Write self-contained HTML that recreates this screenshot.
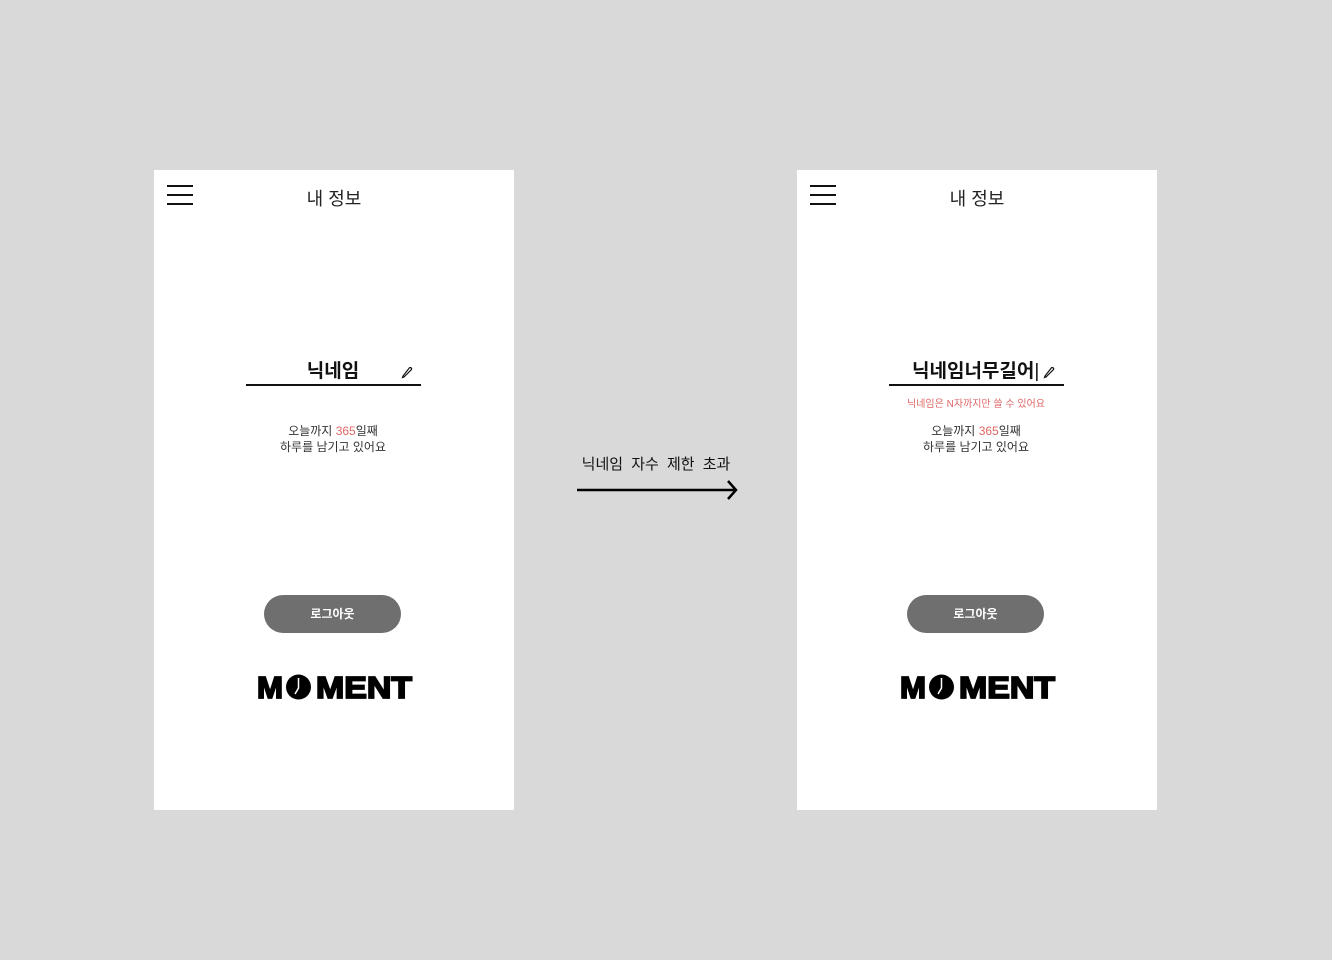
<!DOCTYPE html>
<html><head><meta charset="utf-8"><style>
body{margin:0;width:1332px;height:960px;background:#d9d9d9;position:relative;overflow:hidden;font-family:"Liberation Sans","Noto Sans CJK KR",sans-serif}
.s{position:absolute;top:170px;width:360px;height:640px;background:#fff}
.a{position:absolute}
.ham{left:13px;width:26px;height:2px;background:#111}
.t{left:0;width:360px;text-align:center}
</style></head><body>

<div class="s" style="left:154px">
  <div class="a ham" style="top:15px"></div><div class="a ham" style="top:24px"></div><div class="a ham" style="top:33px"></div>
  <div class="a t" style="top:15px;font-size:18px;color:#222">내 정보</div>
  <div class="a t" style="top:186px;font-size:19px;font-weight:bold;color:#111;left:-1px">닉네임</div>
  <svg class="a" style="left:246px;top:195px" width="14" height="14" viewBox="0 0 14 14"><path d="M3 11 L2.5 12.5 L4 12 L11.5 4.5 Q12 3.5 11 2.8 Q10 2.2 9.3 3 Z" fill="none" stroke="#111" stroke-width="1.2"/></svg>
  <div class="a" style="left:92px;top:214px;width:175px;height:1.5px;background:#111"></div>
  <div class="a t" style="top:253px;font-size:12px;line-height:16px;color:#333;left:-1px">오늘까지 <span style="color:#e06666">365</span>일째<br>하루를 남기고 있어요</div>
  <div class="a" style="left:110px;top:425px;width:137px;height:38px;border-radius:19px;background:#6f6f6f;color:#fff;font-size:12px;font-weight:bold;text-align:center;line-height:38px">로그아웃</div>
  <svg class="a" style="left:100px;top:503px" width="165" height="30"><g stroke="#000" stroke-width="1.8" stroke-linejoin="miter"><text x="3" y="25" font-family="Liberation Sans" font-weight="bold" font-size="31" textLength="26" lengthAdjust="spacingAndGlyphs">M</text><text x="62" y="25" font-family="Liberation Sans" font-weight="bold" font-size="31" textLength="96" lengthAdjust="spacingAndGlyphs">MENT</text></g><circle cx="44.5" cy="14" r="12.5" fill="#000"/><path d="M44.5 5 L44.5 15 L41 21" stroke="#fff" stroke-width="1.5" fill="none"/></svg>
</div>

<div class="a" style="left:560px;top:453px;width:192px;text-align:center;font-size:15px;color:#111;word-spacing:4px">닉네임 자수 제한 초과</div>
<svg class="a" style="left:575px;top:478px" width="165" height="25"><path d="M2 12 H160 M153 3 L161 12 L153 21" stroke="#000" stroke-width="2.5" fill="none"/></svg>

<div class="s" style="left:797px">
  <div class="a ham" style="top:15px"></div><div class="a ham" style="top:24px"></div><div class="a ham" style="top:33px"></div>
  <div class="a t" style="top:15px;font-size:18px;color:#222">내 정보</div>
  <div class="a" style="left:115px;top:186px;font-size:19px;font-weight:bold;color:#111">닉네임너무길어<span style="font-weight:normal">|</span></div>
  <svg class="a" style="left:245px;top:195px" width="14" height="14" viewBox="0 0 14 14"><path d="M3 11 L2.5 12.5 L4 12 L11.5 4.5 Q12 3.5 11 2.8 Q10 2.2 9.3 3 Z" fill="none" stroke="#111" stroke-width="1.2"/></svg>
  <div class="a" style="left:92px;top:214px;width:175px;height:1.5px;background:#111"></div>
  <div class="a t" style="top:225px;font-size:10px;color:#e06666;left:-1px">닉네임은 N자까지만 쓸 수 있어요</div>
  <div class="a t" style="top:253px;font-size:12px;line-height:16px;color:#333;left:-1px">오늘까지 <span style="color:#e06666">365</span>일째<br>하루를 남기고 있어요</div>
  <div class="a" style="left:110px;top:425px;width:137px;height:38px;border-radius:19px;background:#6f6f6f;color:#fff;font-size:12px;font-weight:bold;text-align:center;line-height:38px">로그아웃</div>
  <svg class="a" style="left:100px;top:503px" width="165" height="30"><g stroke="#000" stroke-width="1.8" stroke-linejoin="miter"><text x="3" y="25" font-family="Liberation Sans" font-weight="bold" font-size="31" textLength="26" lengthAdjust="spacingAndGlyphs">M</text><text x="62" y="25" font-family="Liberation Sans" font-weight="bold" font-size="31" textLength="96" lengthAdjust="spacingAndGlyphs">MENT</text></g><circle cx="44.5" cy="14" r="12.5" fill="#000"/><path d="M44.5 5 L44.5 15 L41 21" stroke="#fff" stroke-width="1.5" fill="none"/></svg>
</div>
</body></html>
